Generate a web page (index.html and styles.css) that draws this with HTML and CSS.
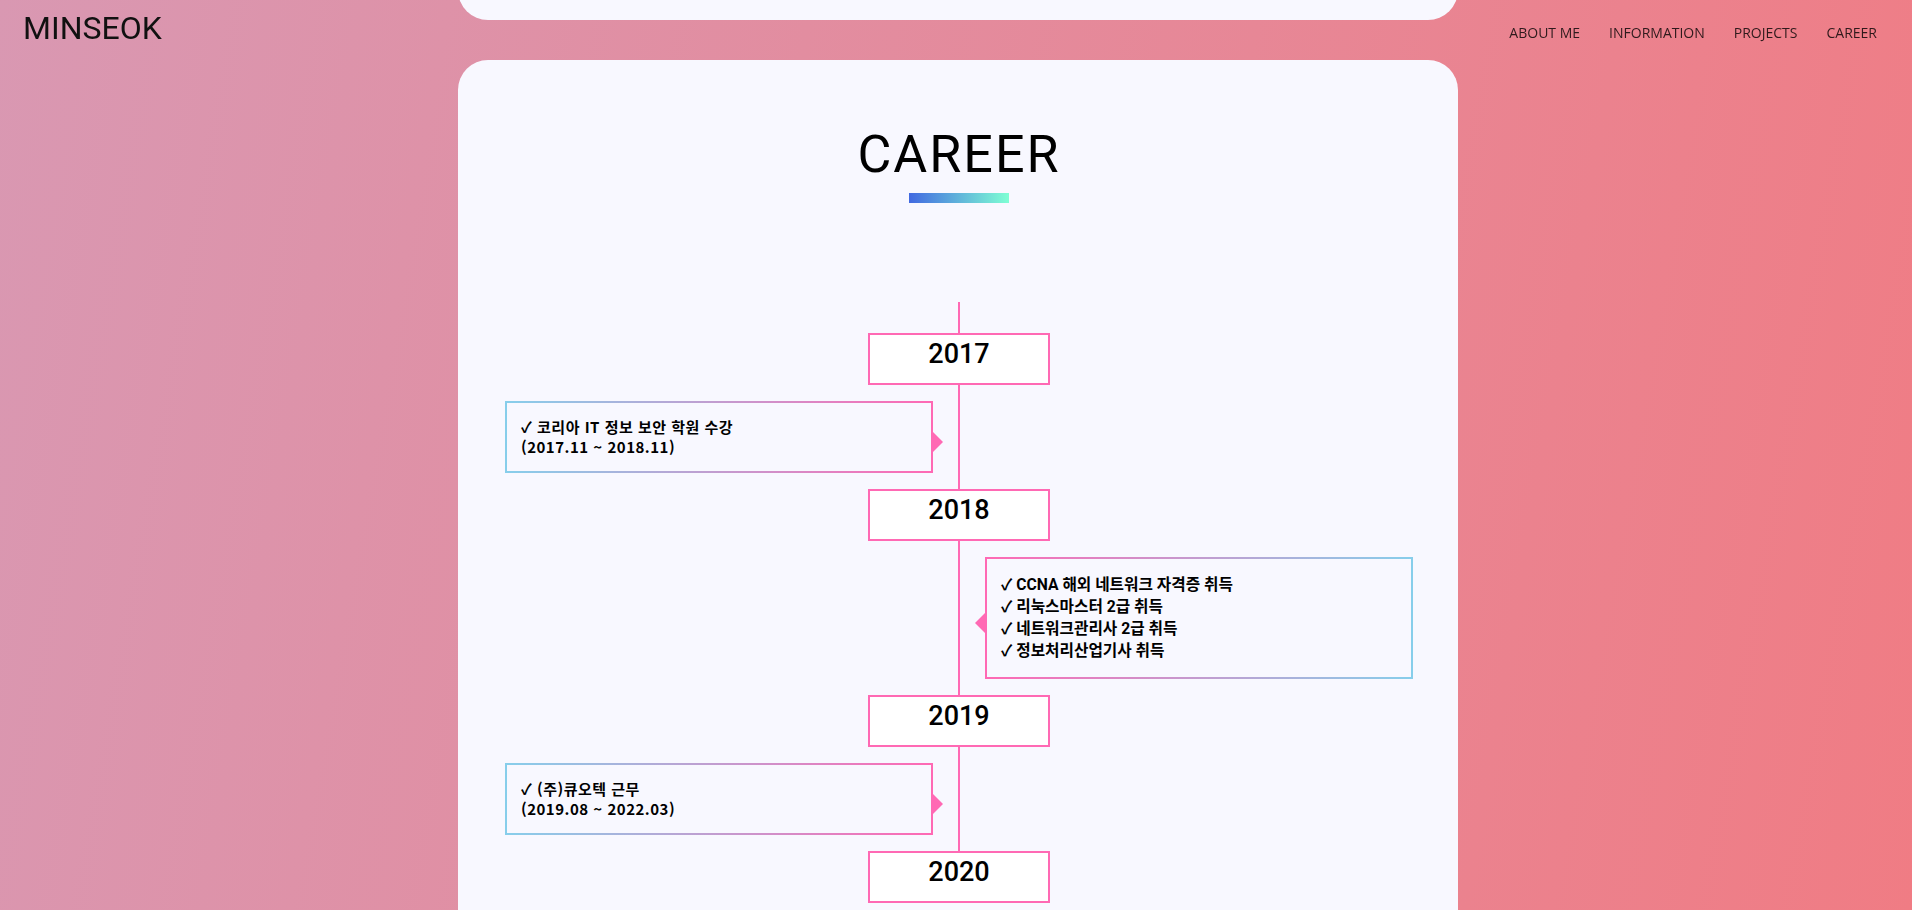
FILE: index.html
```html
<!DOCTYPE html>
<html lang="ko">
<head>
  <meta charset="UTF-8" />
  <meta name="viewport" content="width=device-width, initial-scale=1.0"/>
  <title>MINSEOK</title>
  <link rel="stylesheet" href="styles.css">
</head>
<body>

  <!-- Header -->
  <header class="header">
    <a class="logo" href="#">MINSEOK</a>
    <nav class="nav">
      <a href="#about">ABOUT ME</a>
      <a href="#information">INFORMATION</a>
      <a href="#projects">PROJECTS</a>
      <a href="#career">CAREER</a>
    </nav>
  </header>

  <!-- Projects (scrolled past) -->
  <section class="card card-prev" id="projects"></section>

  <!-- Career -->
  <section class="card" id="career">
    <h2 class="title">CAREER</h2>
    <div class="title-bar"></div>

    <div class="timeline">
      <div class="year">2017</div>
      <div class="entry left kr">
        ✓ 코리아 IT 정보 보안 학원 수강<br>
        (2017.11 ~ 2018.11)
      </div>

      <div class="year">2018</div>
      <div class="entry right">
        ✓ CCNA 해외 네트워크 자격증 취득<br>
        ✓ 리눅스마스터 2급 취득<br>
        ✓ 네트워크관리사 2급 취득<br>
        ✓ 정보처리산업기사 취득
      </div>

      <div class="year">2019</div>
      <div class="entry left kr">
        ✓ (주)큐오텍 근무<br>
        (2019.08 ~ 2022.03)
      </div>

      <div class="year">2020</div>
    </div>
  </section>

</body>
</html>
```

FILE: styles.css
```css
body {
  margin: 0;
  font-family: Roboto, "Noto Sans CJK KR", sans-serif;
  color: #000;
  overflow-x: hidden;
  background: linear-gradient(100deg, #d998b2, #f07c84) fixed;
  min-height: 100vh;
}

a {
  color: inherit;
  text-decoration: none;
}

/* Header */
.header {
  position: fixed;
  top: 0;
  left: 0;
  right: 0;
  display: flex;
  justify-content: space-between;
  align-items: flex-start;
  padding: 0 35px 0 23px;
  z-index: 10;
}

.logo {
  font-family: Roboto, sans-serif;
  font-size: 32px;
  font-weight: 400;
  line-height: 1;
  padding-top: 12px;
  color: #111;
}

.nav {
  display: flex;
  gap: 29px;
  padding-top: 23px;
}

.nav a {
  font-family: "Open Sans", sans-serif;
  font-size: 14px;
  line-height: 20px;
  color: rgba(0, 0, 0, 0.8);
}

/* Cards */
.card {
  width: 1000px;
  margin: 0 auto 40px;
  padding-left: 2px;
  box-sizing: border-box;
  background: #f8f8ff;
  border-radius: 30px;
  position: relative;
  left: 2px;
  text-align: center;
}

.card-prev {
  height: 100px;
  margin-top: -80px;
}

#career {
  padding-top: 64px;
  min-height: 900px;
}

.title {
  margin: 0;
  font-size: 52px;
  font-weight: 400;
  letter-spacing: 2px;
  line-height: 61px;
}

.title-bar {
  width: 100px;
  height: 10px;
  margin: 8px auto 0;
  background: linear-gradient(to right, #4169e1, #7fffd4);
}

/* Timeline */
.timeline {
  width: 908px;
  margin: 99px auto 0;
  padding-top: 31px;
  display: flex;
  flex-direction: column;
  gap: 16px;
  position: relative;
}

.timeline::before {
  content: "";
  position: absolute;
  top: 0;
  bottom: 0;
  left: 453px;
  width: 2px;
  background: #ff69b4;
}

.year {
  width: 182px;
  height: 52px;
  box-sizing: border-box;
  align-self: center;
  background: #fff;
  border: 2px solid #ff69b4;
  font-size: 27px;
  font-weight: 500;
  line-height: 38px;
  position: relative;
  z-index: 1;
}

.entry {
  width: 428px;
  box-sizing: border-box;
  border: 2px solid;
  padding: 15px 14px;
  text-align: left;
  font-family: Roboto, "Noto Sans CJK KR", sans-serif;
  font-size: 15.7px;
  font-weight: 700;
  line-height: 22px;
  position: relative;
  background: #f8f8ff;
}

.entry.kr {
  font-family: "Noto Sans CJK KR", sans-serif;
  font-size: 15px;
  line-height: 20px;
  padding: 14px 14px;
  letter-spacing: 0.5px;
}

.entry.left {
  align-self: flex-start;
  border-image: linear-gradient(to right, #87ceeb, #ff69b4) 1;
}

.entry.right {
  align-self: flex-end;
  border-image: linear-gradient(to right, #ff69b4, #87ceeb) 1;
}

.entry::after {
  content: "";
  position: absolute;
  top: calc(50% - 7px);
  border: 12px solid transparent;
}

.entry.left::after {
  right: -24px;
  border-left-color: #ff69b4;
}

.entry.right::after {
  left: -24px;
  border-right-color: #ff69b4;
}
```
